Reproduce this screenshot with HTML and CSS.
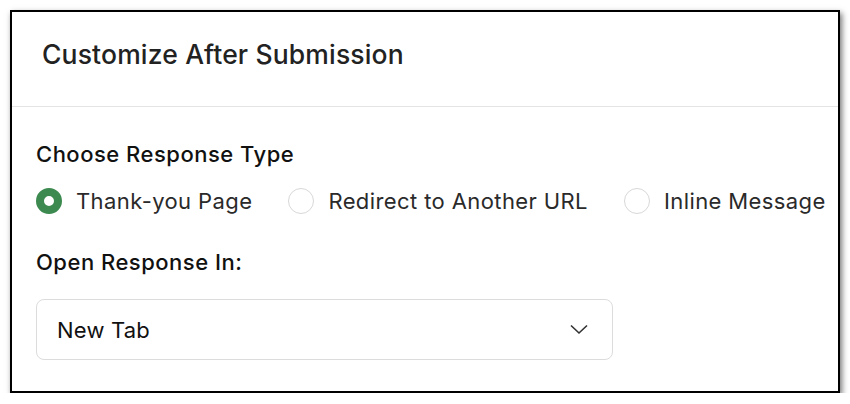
FILE: index.html
```html
<!DOCTYPE html>
<html>
<head>
<meta charset="utf-8">
<link rel="stylesheet" href="styles.css">
</head>
<body>
<div class="panel">
  <div class="header">
    <h1 class="title">Customize After Submission</h1>
  </div>
  <div class="content">
    <div class="label">Choose Response Type</div>
    <div class="radios">
      <label class="radio"><span class="dot checked"></span><span class="rtext">Thank-you Page</span></label>
      <label class="radio"><span class="dot"></span><span class="rtext">Redirect to Another URL</span></label>
      <label class="radio"><span class="dot"></span><span class="rtext">Inline Message</span></label>
    </div>
    <div class="label label2">Open Response In:</div>
    <div class="select">
      <span class="seltext">New Tab</span>
      <svg class="chev" width="18" height="11" viewBox="0 0 18 11"><path d="M1 1.5 L9 9 L17 1.5" fill="none" stroke="#333" stroke-width="1.6"/></svg>
    </div>
  </div>
</div>
</body>
</html>
```
FILE: styles.css
```css
html, body {
  margin: 0;
  padding: 0;
  background: #fff;
}
body {
  font-family: Inter, "Noto Sans", sans-serif;
  padding: 10px 0 0 10px;
}
.panel {
  width: 826px;
  height: 379px;
  border: 2px solid #000;
  box-shadow: 2px 3px 6px rgba(0,0,0,0.55);
  background: #fff;
  box-sizing: content-box;
}
.header {
  height: 95px;
  box-sizing: border-box;
  border-bottom: 1px solid #e4e4e4;
  display: flex;
  align-items: flex-start;
  padding: 24px 0 0 30px;
}
.title {
  margin: 0;
  font-size: 26.5px;
  line-height: 36px;
  font-weight: 500;
  letter-spacing: 0.15px;
  color: #222;
}
.content {
  padding: 33px 0 0 24px;
}
.label {
  font-size: 22px;
  font-weight: 500;
  letter-spacing: 0.5px;
  color: #111;
  line-height: 28px;
}
.radios {
  display: flex;
  gap: 36px;
  margin-top: 20px;
}
.radio {
  display: flex;
  align-items: center;
  gap: 14px;
}
.dot {
  width: 26px;
  height: 26px;
  box-sizing: border-box;
  border-radius: 50%;
  border: 1.5px solid #d8d8d8;
}
.dot.checked {
  border: 8px solid #3c8a50;
}
.rtext {
  font-size: 22px;
  letter-spacing: 0.4px;
  color: #2a2a2a;
}
.label2 {
  margin-top: 34px;
}
.select {
  margin-top: 23px;
  width: 577px;
  height: 61px;
  box-sizing: border-box;
  border: 1px solid #dcdcdc;
  border-radius: 8px;
  display: flex;
  align-items: center;
  justify-content: space-between;
  padding: 0 24px 0 20px;
}
.seltext {
  font-size: 22px;
  letter-spacing: 0.2px;
  color: #111;
}
```
